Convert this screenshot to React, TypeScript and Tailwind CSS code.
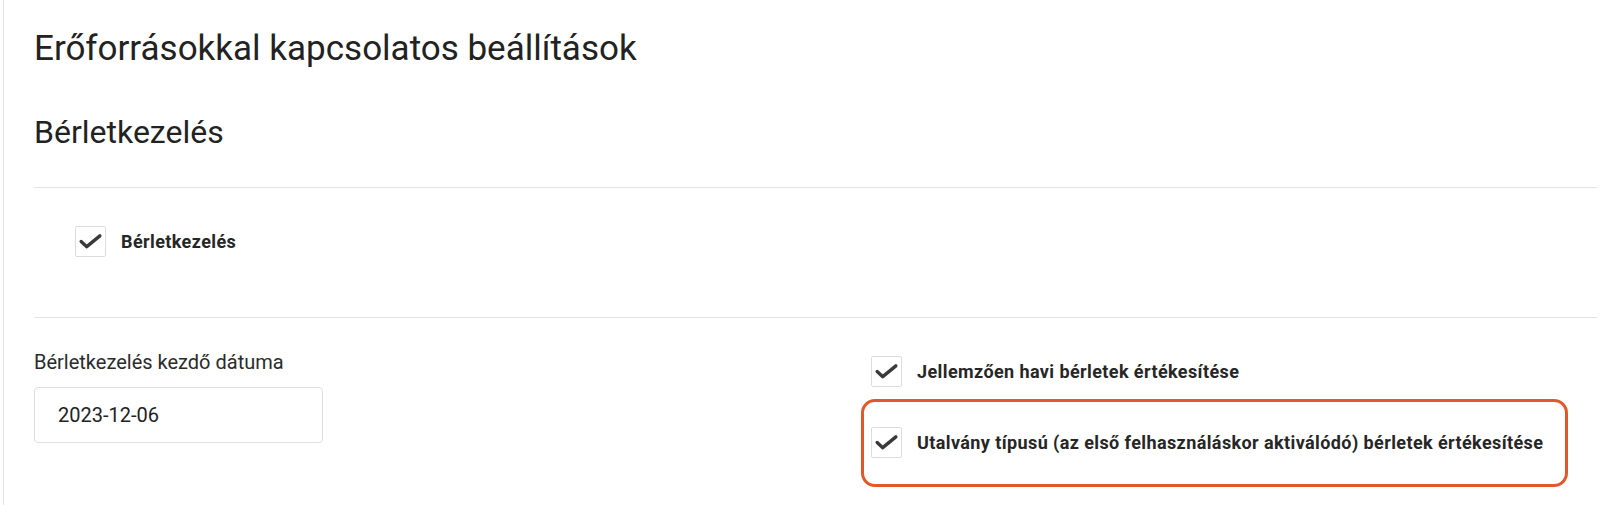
import React from "react";

const Check = () => (
  <div className="w-[31px] h-[31px] shrink-0 border border-[#dcdcdc] rounded-[2px] bg-white flex items-center justify-center">
    <svg width="31" height="31" viewBox="0 0 31 31">
      <path
        d="M5.5 15.5 L11.5 21 L25.5 9.5"
        fill="none"
        stroke="#3a3a3a"
        strokeWidth="3.6"
        strokeLinecap="round"
        strokeLinejoin="round"
      />
    </svg>
  </div>
);

const CheckRow = ({ label }: { label: string }) => (
  <div className="flex items-center gap-[15px]">
    <Check />
    <span className="text-[18px] leading-[22px] font-bold tracking-[0.4px] text-[#262626]">{label}</span>
  </div>
);

const App = () => {
  return (
    <main className="min-h-screen bg-white pl-[3px] font-['Roboto',sans-serif]">
      <div className="min-h-[505px] border-l border-[#e4e4e4] pl-[30px] pr-[3px]">
        <h1 className="pt-[31px] text-[35px] leading-[36px] font-normal text-[#222]">
          Erőforrásokkal kapcsolatos beállítások
        </h1>
        <h2 className="mt-[49px] text-[32px] leading-[32px] font-normal text-[#222]">
          Bérletkezelés
        </h2>

        <div className="mt-[39px] border-t border-[#e2e2e2]">
          <div className="pt-[38px] pb-[60px] pl-[41px]">
            <CheckRow label="Bérletkezelés" />
          </div>
        </div>

        <div className="border-t border-[#e2e2e2] flex">
          <div className="w-[827px] shrink-0 pt-[32px]">
            <label className="block text-[20px] leading-[24px] text-[#2b2b2b]">
              Bérletkezelés kezdő dátuma
            </label>
            <div className="mt-[13px] w-[289px] h-[56px] border border-[#dedede] rounded-[4px] flex items-center pl-[23px] text-[20px] text-[#222]">
              2023-12-06
            </div>
          </div>

          <div className="w-[707px] pt-[38px]">
            <div className="pl-[10px]">
              <CheckRow label="Jellemzően havi bérletek értékesítése" />
            </div>
            <div className="mt-[12px] border-[3px] border-[#e0592a] rounded-[14px] pl-[7px] pt-[25px] pb-[26px]">
              <CheckRow label="Utalvány típusú (az első felhasználáskor aktiválódó) bérletek értékesítése" />
            </div>
          </div>
        </div>
      </div>
    </main>
  );
};

export default App;
